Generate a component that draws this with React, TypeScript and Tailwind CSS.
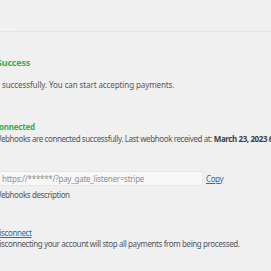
export default function App() {
  const font = { fontFamily: '"Noto Sans", "Open Sans", sans-serif' };
  return (
    <div className="w-[271px] h-[271px] overflow-hidden bg-[#f0f0f1] text-[#50575e] text-[8px] leading-[12px] tracking-[-0.4px]" style={font}>
      <div className="h-[31px] relative">
        <div className="absolute left-0 bottom-0 w-[16px] h-[3px] bg-[#f5f5f5]" />
      </div>
      <div className="h-px bg-[#e4e4e4]" />
      <div className="-ml-[6px] w-[600px] whitespace-nowrap">
        <div className="pt-[25px] pl-[3px] font-bold text-[#2fb34d] text-[9px] tracking-[-0.2px]">Success</div>
        <div className="pt-[10px] pl-[8px] tracking-[-0.1px]">successfully. You can start accepting payments.</div>
        <div className="pt-[30px] font-bold text-[#2fb34d] tracking-[-0.2px]">Connected</div>
        <div>
          Webhooks are connected successfully. Last webhook received at: <b className="text-[#3c434a]">March 23, 2023 6:15 pm</b>
        </div>
        <div className="pt-[26px] flex items-center">
          <div className="w-[209px] h-[15px] bg-[#f8f8f9] border border-[#e6e6e8] rounded-[2px] flex items-center pl-[7px] text-[#8c8f94] tracking-[-0.25px]">
            https://******/?pay_gate_listener=stripe
          </div>
          <span className="ml-[3px] text-[#2271b1] underline">Copy</span>
        </div>
        <div className="pt-[3px]">Webhooks description</div>
        <div className="pt-[26px] leading-[11px] text-[#2271b1] underline">Disconnect</div>
        <div className="leading-[11px]">Disconnecting your account will stop all payments from being processed.</div>
      </div>
    </div>
  );
}
